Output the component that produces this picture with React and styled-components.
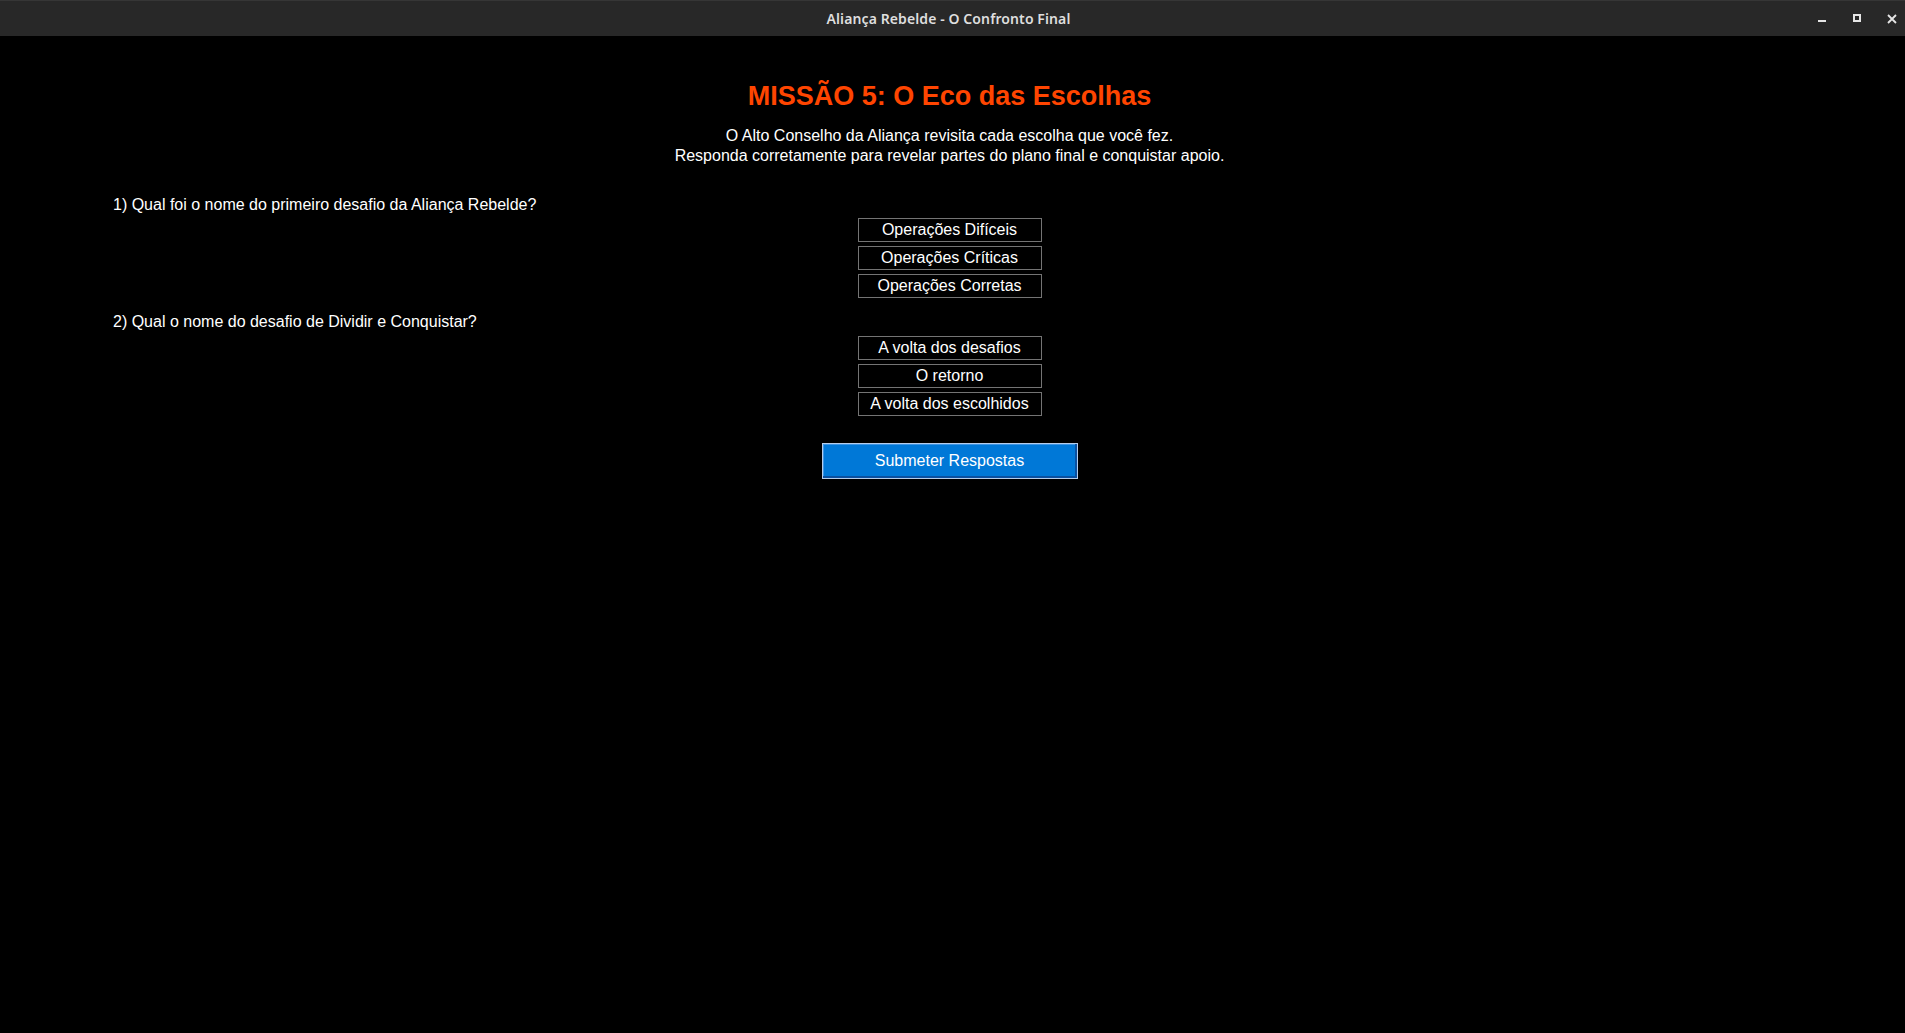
import React from "react";
import styled, { createGlobalStyle } from "styled-components";

const GlobalStyle = createGlobalStyle`
  html, body { margin: 0; padding: 0; background: #000; }
  body { font-family: "Liberation Sans", Arial, sans-serif; }
  * { box-sizing: border-box; }
`;

const Window = styled.div`
  min-height: 100vh;
  display: flex;
  flex-direction: column;
  background: #000;
`;

const TitleBar = styled.header`
  height: 36px;
  flex: 0 0 36px;
  display: grid;
  grid-template-columns: 1fr auto 1fr;
  align-items: center;
  background: #282828;
  border-top: 1px solid #363636;
  padding: 0 8px 0 0;
`;

const WindowTitle = styled.div`
  grid-column: 2;
  font-family: "Noto Sans", "DejaVu Sans", sans-serif;
  font-weight: 600;
  font-size: 14px;
  color: #dedede;
  letter-spacing: 0.1px;
`;

const Controls = styled.div`
  grid-column: 3;
  justify-self: end;
  display: flex;
  align-items: center;
  gap: 25px;
  height: 100%;
`;

const CtrlIcon = styled.svg`
  display: block;
  width: 10px;
  height: 10px;
  color: #e6e6e6;
`;

const Content = styled.main`
  display: flex;
  flex-direction: column;
  align-items: center;
  padding: 44px 6px 0 0;
  color: #fff;
`;

const Heading = styled.h1`
  margin: 0;
  font-size: 27px;
  line-height: 32px;
  font-weight: 700;
  color: #ff4500;
`;

const Intro = styled.p`
  margin: 14px 0 0;
  font-size: 16px;
  line-height: 20px;
  text-align: center;
  color: #fff;
`;

const Question = styled.section`
  align-self: stretch;
  display: flex;
  flex-direction: column;
  align-items: center;
  margin-top: ${(p) => p.$top}px;
`;

const QuestionLabel = styled.div`
  align-self: stretch;
  padding-left: 113px;
  font-size: 16px;
  line-height: 20px;
  color: #fff;
`;

const Options = styled.div`
  display: flex;
  flex-direction: column;
  gap: 4px;
  margin-top: ${(p) => p.$top}px;
`;

const OptionButton = styled.button`
  width: 184px;
  height: 24px;
  padding: 0;
  background: #000;
  border: 1px solid #747474;
  color: #fff;
  font-family: "Liberation Sans", Arial, sans-serif;
  font-size: 16px;
  line-height: 22px;
  text-align: center;
  cursor: pointer;
`;

const SubmitButton = styled.button`
  margin-top: 27px;
  width: 256px;
  height: 36px;
  padding: 0;
  background: #0078d7;
  border: 1px solid #b4cdec;
  box-shadow: inset -2px -2px 0 #0a50a0, inset 1px 1px 0 #3d95e4;
  color: #fff;
  font-family: "Liberation Sans", Arial, sans-serif;
  font-size: 16px;
  line-height: 20px;
  cursor: pointer;
`;

const questions = [
  {
    label: "1) Qual foi o nome do primeiro desafio da Aliança Rebelde?",
    top: 29,
    gap: 3,
    options: ["Operações Difíceis", "Operações Críticas", "Operações Corretas"],
  },
  {
    label: "2) Qual o nome do desafio de Dividir e Conquistar?",
    top: 14,
    gap: 4,
    options: ["A volta dos desafios", "O retorno", "A volta dos escolhidos"],
  },
];

export default function App() {
  return (
    <>
      <GlobalStyle />
      <Window>
        <TitleBar>
          <WindowTitle>Aliança Rebelde - O Confronto Final</WindowTitle>
          <Controls>
            <CtrlIcon viewBox="0 0 10 10">
              <rect x="1" y="6" width="8" height="2" fill="currentColor" />
            </CtrlIcon>
            <CtrlIcon viewBox="0 0 10 10">
              <rect x="2" y="1" width="6" height="6" fill="none" stroke="currentColor" strokeWidth="2" />
            </CtrlIcon>
            <CtrlIcon viewBox="0 0 10 10">
              <path d="M1 1 L9 9 M9 1 L1 9" stroke="currentColor" strokeWidth="1.8" />
            </CtrlIcon>
          </Controls>
        </TitleBar>
        <Content>
          <Heading>MISSÃO 5: O Eco das Escolhas</Heading>
          <Intro>
            O Alto Conselho da Aliança revisita cada escolha que você fez.
            <br />
            Responda corretamente para revelar partes do plano final e conquistar apoio.
          </Intro>
          {questions.map((q) => (
            <Question key={q.label} $top={q.top}>
              <QuestionLabel>{q.label}</QuestionLabel>
              <Options $top={q.gap}>
                {q.options.map((o) => (
                  <OptionButton key={o}>{o}</OptionButton>
                ))}
              </Options>
            </Question>
          ))}
          <SubmitButton>Submeter Respostas</SubmitButton>
        </Content>
      </Window>
    </>
  );
}
